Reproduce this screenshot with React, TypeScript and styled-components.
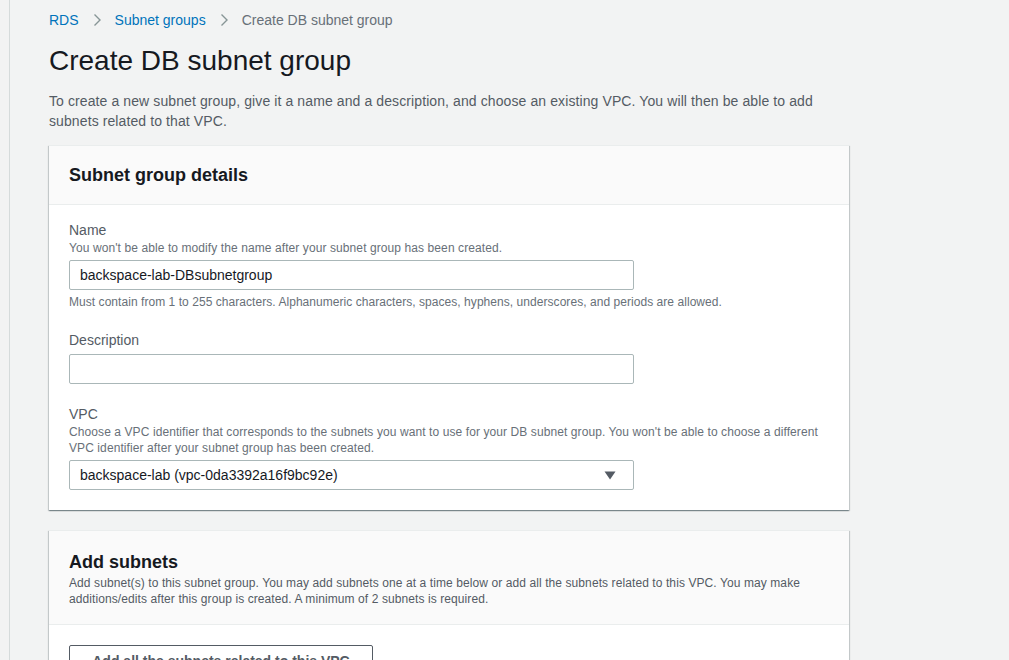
import React from "react";
import styled, { createGlobalStyle } from "styled-components";

const Global = createGlobalStyle`
  html, body {
    margin: 0;
    padding: 0;
    height: 660px;
    overflow: hidden;
    background: #f2f3f3;
  }
  body {
    font-family: "Liberation Sans", Arial, sans-serif;
    color: #16191f;
    -webkit-font-smoothing: antialiased;
  }
`;

const Shell = styled.div`
  display: flex;
  min-height: 660px;
`;

const Gutter = styled.div`
  width: 9px;
  flex: none;
  border-right: 1px solid #d5dbdb;
`;

const Main = styled.main`
  flex: 1;
  padding: 10px 0 40px 39px;
`;

const Content = styled.div`
  width: 800px;
`;

const Crumbs = styled.nav`
  display: flex;
  align-items: center;
  font-size: 14px;
  line-height: 20px;
`;

const Crumb = styled.a<{ $current?: boolean }>`
  color: ${(p) => (p.$current ? "#687078" : "#0073bb")};
  text-decoration: none;
`;

const Sep = styled.span`
  display: inline-flex;
  align-items: center;
  margin: 0 13px 0 14px;
  color: #879596;
`;

const Title = styled.h1`
  margin: 13px 0 0;
  font-size: 28px;
  line-height: 36px;
  font-weight: 400;
  color: #16191f;
`;

const Intro = styled.p`
  margin: 12px 0 0;
  font-size: 14px;
  line-height: 20px;
  letter-spacing: 0.1px;
  color: #545b64;
`;

const Card = styled.section<{ $gap: number }>`
  margin-top: ${(p) => p.$gap}px;
  background: #ffffff;
  box-shadow: 0 1px 1px 0 rgba(0, 28, 36, 0.3),
    1px 1px 1px 0 rgba(0, 28, 36, 0.15),
    -1px 1px 1px 0 rgba(0, 28, 36, 0.15);
  border-top: 1px solid #eaeded;
`;

const CardHeader = styled.header<{ $pt: number; $pb: number }>`
  background: #fafafa;
  border-bottom: 1px solid #eaeded;
  padding: ${(p) => p.$pt}px 20px ${(p) => p.$pb}px;
`;

const CardTitle = styled.h2`
  margin: 0;
  font-size: 18px;
  line-height: 20px;
  font-weight: 700;
  color: #16191f;
`;

const CardDesc = styled.p`
  margin: 3px 0 0;
  font-size: 12px;
  line-height: 16px;
  letter-spacing: 0.09px;
  color: #545b64;
`;

const CardBody = styled.div<{ $top: number }>`
  padding: ${(p) => p.$top}px 20px 20px;
  display: flex;
  flex-direction: column;
  gap: 20px;
`;

const Field = styled.div`
  display: flex;
  flex-direction: column;
`;

const Label = styled.label`
  font-size: 14px;
  line-height: 20px;
  color: #545b64;
`;

const Help = styled.div`
  font-size: 12px;
  line-height: 16px;
  letter-spacing: 0.09px;
  color: #687078;
`;

const Constraint = styled(Help)`
  margin-top: 4px;
  letter-spacing: 0.05px;
`;

const Input = styled.input`
  box-sizing: border-box;
  margin-top: 4px;
  width: 565px;
  height: 30px;
  border: 1px solid #aab7b8;
  border-radius: 2px;
  background: #fff;
  padding: 0 10px;
  font-family: inherit;
  font-size: 14px;
  color: #16191f;
  outline: none;
`;

const Select = styled.div`
  box-sizing: border-box;
  margin-top: 4px;
  width: 565px;
  height: 30px;
  border: 1px solid #aab7b8;
  border-radius: 2px;
  background: #fff;
  padding: 0 17px 0 10px;
  display: flex;
  align-items: center;
  justify-content: space-between;
  font-size: 14px;
  color: #16191f;
`;

const Button = styled.button`
  align-self: flex-start;
  box-sizing: border-box;
  width: 304px;
  height: 32px;
  border: 1px solid #545b64;
  border-radius: 2px;
  background: #fff;
  font-family: inherit;
  font-size: 14px;
  font-weight: 700;
  color: #545b64;
  padding: 4px 20px;
`;

const Chevron = () => (
  <svg width="9" height="14" viewBox="0 0 9 14" fill="none">
    <path d="M1.5 1.5 L7 7 L1.5 12.5" stroke="currentColor" strokeWidth="1.4" />
  </svg>
);

const Caret = () => (
  <svg width="12" height="9" viewBox="0 0 12 9">
    <path d="M0.5 0.5 H11.5 L6 8.5 Z" fill="#545b64" />
  </svg>
);

export default function App() {
  return (
    <>
      <Global />
      <Shell>
        <Gutter />
        <Main>
          <Content>
            <Crumbs>
              <Crumb href="#">RDS</Crumb>
              <Sep>
                <Chevron />
              </Sep>
              <Crumb href="#">Subnet groups</Crumb>
              <Sep>
                <Chevron />
              </Sep>
              <Crumb $current>Create DB subnet group</Crumb>
            </Crumbs>
            <Title>Create DB subnet group</Title>
            <Intro>
              To create a new subnet group, give it a name and a description, and choose an existing
              VPC. You will then be able to add subnets related to that VPC.
            </Intro>

            <Card $gap={14}>
              <CardHeader $pt={19} $pb={19}>
                <CardTitle>Subnet group details</CardTitle>
              </CardHeader>
              <CardBody $top={15}>
                <Field>
                  <Label>Name</Label>
                  <Help>You won't be able to modify the name after your subnet group has been created.</Help>
                  <Input defaultValue="backspace-lab-DBsubnetgroup" />
                  <Constraint>
                    Must contain from 1 to 255 characters. Alphanumeric characters, spaces, hyphens,
                    underscores, and periods are allowed.
                  </Constraint>
                </Field>
                <Field>
                  <Label>Description</Label>
                  <Input defaultValue="" />
                </Field>
                <Field>
                  <Label>VPC</Label>
                  <Help>
                    Choose a VPC identifier that corresponds to the subnets you want to use for your DB
                    subnet group. You won't be able to choose a different VPC identifier after your
                    subnet group has been created.
                  </Help>
                  <Select>
                    <span>backspace-lab (vpc-0da3392a16f9bc92e)</span>
                    <Caret />
                  </Select>
                </Field>
              </CardBody>
            </Card>

            <Card $gap={20}>
              <CardHeader $pt={21} $pb={17}>
                <CardTitle>Add subnets</CardTitle>
                <CardDesc>
                  Add subnet(s) to this subnet group. You may add subnets one at a time below or add
                  all the subnets related to this VPC. You may make additions/edits after this group is
                  created. A minimum of 2 subnets is required.
                </CardDesc>
              </CardHeader>
              <CardBody $top={20}>
                <Button>Add all the subnets related to this VPC</Button>
              </CardBody>
            </Card>
          </Content>
        </Main>
      </Shell>
    </>
  );
}
